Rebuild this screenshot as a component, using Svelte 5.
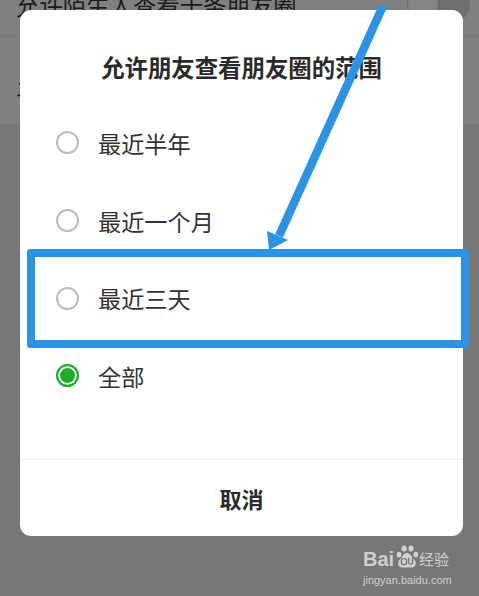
<script lang="ts">
  const options = [
    { label: '最近半年', checked: false },
    { label: '最近一个月', checked: false },
    { label: '最近三天', checked: false },
    { label: '全部', checked: true }
  ];
</script>

<div class="page">
  <div class="settings">
    <div class="setting first">
      <span>允许陌生人查看十条朋友圈</span>
      <div class="toggle"><div class="knob"></div></div>
    </div>
    <div class="setting second">
      <span>允许朋友查看朋友圈的范围</span>
    </div>
  </div>

  <div class="dialog">
    <div class="title">允许朋友查看朋友圈的范围</div>
    <div class="options">
      {#each options as opt}
        <div class="option">
          <span class="radio" class:checked={opt.checked}></span>
          <span class="label">{opt.label}</span>
        </div>
      {/each}
    </div>
    <div class="cancel">取消</div>
  </div>

  <!-- annotation drawn over the screenshot -->
  <div class="highlight"></div>
  <svg class="arrow" width="479" height="260" viewBox="0 0 479 260">
    <line x1="383" y1="6" x2="279" y2="236" stroke="#2a93e6" stroke-width="8.5" />
    <path d="M269 250 L267 231 L288 240 Z" fill="#2a93e6" />
  </svg>

  <div class="watermark">
    <div class="brand">
      <span class="bai">Bai</span>
      <svg class="paw" width="24" height="26" viewBox="0 0 30 32">
        <ellipse cx="5" cy="13" rx="3" ry="3.6" fill="#cfcfcf" />
        <ellipse cx="11.5" cy="5.5" rx="3.2" ry="3.8" fill="#cfcfcf" />
        <ellipse cx="20" cy="5.5" rx="3.2" ry="3.8" fill="#cfcfcf" />
        <ellipse cx="26" cy="13" rx="3" ry="3.6" fill="#cfcfcf" />
        <path d="M15 11 C10 11 10 16 6 19 C2 23 4 29 9 29 L21 29 C26 29 28 23 24 19 C20 16 20 11 15 11 Z" fill="#cfcfcf" />
        <rect x="8" y="18" width="6.5" height="7.5" rx="2.5" fill="none" stroke="#777" stroke-width="1.6" />
        <path d="M17 17 V23 C17 25.5 22 25.5 22 23 V17" fill="none" stroke="#777" stroke-width="1.6" />
      </svg>
      <span class="jy">经验</span>
    </div>
    <div class="url">jingyan.baidu.com</div>
  </div>
</div>

<style>
  :global(body) {
    margin: 0;
    background: #777;
  }

  .page {
    position: relative;
    width: 479px;
    height: 596px;
    overflow: hidden;
    background: #777;
    font-family: "Noto Sans CJK SC", "Liberation Sans", sans-serif;
  }

  .settings {
    height: 124px;
    overflow: hidden;
    display: flex;
    flex-direction: column;
    background: #808080;
    color: #1c1c1c;
    font-size: 23.4px;
  }

  .setting {
    display: flex;
    flex: none;
    align-items: center;
    justify-content: space-between;
    padding: 0 9px 0 16px;
    box-sizing: border-box;
  }

  .setting.first {
    height: 62px;
    margin-top: -26px;
    border-bottom: 1px solid #777;
  }

  .setting.second {
    height: 78px;
    padding-top: 17px;
  }

  .toggle {
    width: 63px;
    height: 34px;
    border-radius: 17px;
    background: #6e6e6e;
    box-sizing: border-box;
    display: flex;
  }

  .knob {
    width: 32px;
    height: 34px;
    border-radius: 50%;
    background: #858585;
    border: 1px solid #6a6a6a;
    box-sizing: border-box;
  }

  .dialog {
    position: absolute;
    left: 20px;
    top: 10px;
    width: 443px;
    height: 526px;
    background: #fff;
    border-radius: 11px;
    display: flex;
    flex-direction: column;
    color: #2a2a2a;
  }

  .title {
    margin-top: 41px;
    height: 33px;
    line-height: 33px;
    font-size: 23.4px;
    font-weight: 700;
    text-align: center;
  }

  .options {
    margin-top: 20px;
    flex: 1;
  }

  .option {
    display: flex;
    align-items: center;
    height: 77.7px;
    padding-left: 36px;
  }

  .radio {
    width: 23px;
    height: 23px;
    border-radius: 50%;
    border: 2px solid #bdbdbd;
    box-sizing: border-box;
    margin-right: 19px;
    flex: none;
  }

  .radio.checked {
    border-color: #1fae27;
    background: #1fae27;
    box-shadow: inset 0 0 0 2px #fff;
  }

  .label {
    font-size: 23.2px;
    color: #333;
  }

  .cancel {
    height: 76px;
    line-height: 76px;
    border-top: 1px solid #efefef;
    text-align: center;
    font-size: 22px;
    font-weight: 700;
  }

  .highlight {
    position: absolute;
    left: 27px;
    top: 249px;
    width: 442px;
    height: 99px;
    box-sizing: border-box;
    border: 8px solid #2a93e6;
    border-radius: 3px;
  }

  .arrow {
    position: absolute;
    left: 0;
    top: 0;
  }

  .watermark {
    position: absolute;
    left: 363px;
    top: 543px;
    color: #cfcfcf;
  }

  .brand {
    display: flex;
    align-items: flex-end;
    height: 27px;
  }

  .bai {
    font-family: "Liberation Sans", sans-serif;
    font-weight: 700;
    font-size: 20px;
    line-height: 22px;
    width: 32px;
  }

  .jy {
    font-size: 15px;
    line-height: 22px;
  }

  .url {
    font-family: "Liberation Sans", sans-serif;
    font-size: 11px;
    line-height: 14px;
    margin-top: 3px;
  }
</style>
